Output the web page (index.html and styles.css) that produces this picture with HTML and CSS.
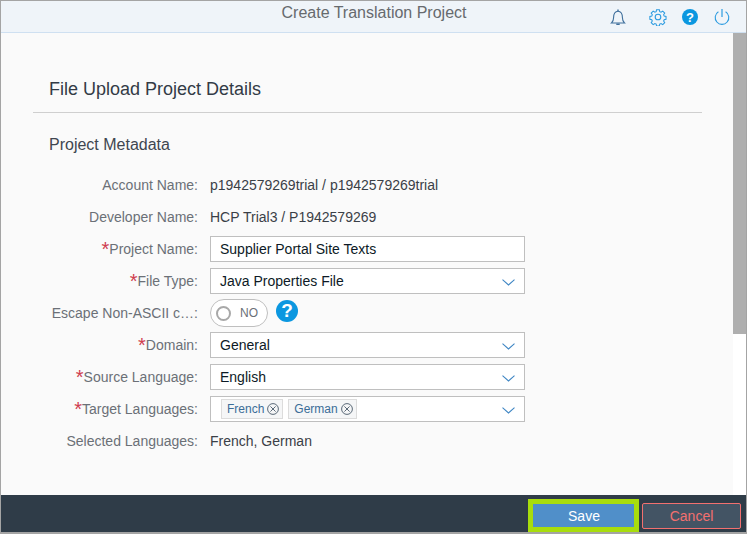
FILE: index.html
```html
<!DOCTYPE html>
<html lang="en">
<head>
<meta charset="utf-8">
<title>Create Translation Project</title>
<link rel="stylesheet" href="styles.css">
</head>
<body>
<div class="app">
  <header class="topbar">
    <div class="topbar-title">Create Translation Project</div>
    <div class="topbar-icons">
      <svg class="ico ico-bell" viewBox="0 0 18 18" width="18" height="18"><path d="M2.500 15h13c-1.600-1.400-2.100-3-2.100-5.500 0-3.500-1.400-6.300-4.400-6.300S4.600 6 4.600 9.500c0 2.500-.5 4.100-2.100 5.500z" fill="none" stroke="#3f6f9c" stroke-width="1.100"/><path d="M9 1.500v1.700M7.300 16.200h3.400" stroke="#3f6f9c" stroke-width="1.400"/></svg>
      <svg class="ico" viewBox="0 0 18 18" width="18" height="18"><path d="M7.500 1.500h3l.4 2.100 1.400.6 1.800-1.200 2.100 2.100-1.200 1.800.6 1.400 2 .4v3l-2 .4-.6 1.400 1.200 1.800-2.100 2.100-1.800-1.200-1.400.6-.4 2h-3l-.4-2-1.400-.6-1.800 1.200-2.100-2.100 1.200-1.800-.6-1.400-2-.4v-3l2-.4.6-1.400-1.200-1.800 2.100-2.100 1.800 1.200 1.400-.6z" transform="translate(.5 .3) scale(.94)" fill="none" stroke="#2b9be0" stroke-width="1.100"/><circle cx="9" cy="9" r="2.800" fill="none" stroke="#2b9be0" stroke-width="1.100"/></svg>
      <span class="help help-top">?</span>
      <svg class="ico" viewBox="0 0 18 18" width="18" height="18"><path d="M5.400 3.800a6.800 6.800 0 1 0 7.200 0" fill="none" stroke="#2b9be0" stroke-width="1.100"/><path d="M9 1v8" stroke="#2b9be0" stroke-width="1.200"/></svg>
    </div>
  </header>
  <div class="body-row">
    <main class="content">
      <h1 class="page-title">File Upload Project Details</h1>
      <h2 class="section-title">Project Metadata</h2>
      <div class="form">
        <div class="row"><label class="lbl">Account Name:</label><span class="val">p1942579269trial / p1942579269trial</span></div>
        <div class="row"><label class="lbl">Developer Name:</label><span class="val">HCP Trial3 / P1942579269</span></div>
        <div class="row"><label class="lbl"><i class="req">*</i>Project Name:</label><div class="field">Supplier Portal Site Texts</div></div>
        <div class="row"><label class="lbl"><i class="req">*</i>File Type:</label><div class="field">Java Properties File<svg class="chev" viewBox="0 0 13 7" width="13" height="7"><path d="M.5.700 6.500 6l6-5.300" fill="none" stroke="#3f86c4" stroke-width="1.100"/></svg></div></div>
        <div class="row"><label class="lbl">Escape Non-ASCII c…:</label>
          <div class="toggle"><span class="knob"></span><span class="toggle-text">NO</span></div>
          <span class="help help-form">?</span>
        </div>
        <div class="row"><label class="lbl"><i class="req">*</i>Domain:</label><div class="field">General<svg class="chev" viewBox="0 0 13 7" width="13" height="7"><path d="M.5.700 6.500 6l6-5.300" fill="none" stroke="#3f86c4" stroke-width="1.100"/></svg></div></div>
        <div class="row"><label class="lbl"><i class="req">*</i>Source Language:</label><div class="field">English<svg class="chev" viewBox="0 0 13 7" width="13" height="7"><path d="M.5.700 6.500 6l6-5.300" fill="none" stroke="#3f86c4" stroke-width="1.100"/></svg></div></div>
        <div class="row"><label class="lbl"><i class="req">*</i>Target Languages:</label>
          <div class="field field-tokens">
            <span class="token">French<svg class="tok-x" viewBox="0 0 12 12" width="12" height="12"><circle cx="6" cy="6" r="5.400" fill="none" stroke="#4a5a6a" stroke-width=".9"/><path d="M3.400 3.400l5.200 5.200M8.600 3.400l-5.200 5.200" stroke="#4a5a6a" stroke-width=".9"/></svg></span>
            <span class="token">German<svg class="tok-x" viewBox="0 0 12 12" width="12" height="12"><circle cx="6" cy="6" r="5.400" fill="none" stroke="#4a5a6a" stroke-width=".9"/><path d="M3.400 3.400l5.200 5.200M8.600 3.400l-5.200 5.200" stroke="#4a5a6a" stroke-width=".9"/></svg></span>
            <svg class="chev" viewBox="0 0 13 7" width="13" height="7"><path d="M.5.700 6.500 6l6-5.300" fill="none" stroke="#3f86c4" stroke-width="1.100"/></svg>
          </div>
        </div>
        <div class="row"><label class="lbl">Selected Languages:</label><span class="val">French, German</span></div>
      </div>
    </main>
    <div class="scrollbar"><div class="thumb"></div></div>
  </div>
  <footer class="footer">
    <button class="btn btn-save">Save</button>
    <button class="btn btn-cancel">Cancel</button>
  </footer>
</div>
</body>
</html>
```
FILE: styles.css
```css
* { box-sizing: border-box; }
html, body { margin: 0; height: 100%; background: #fff; }
body { font-family: "Liberation Sans", Arial, sans-serif; overflow: hidden; }
.app {
  width: 747px; height: 534px;
  display: flex; flex-direction: column;
  border: 1px solid #a4a4a4; border-bottom-width: 2px;
}
.topbar {
  height: 32px; flex: none;
  display: flex; align-items: center; position: relative;
  background: #eff4f9; border-bottom: 1px solid #cfe0f1;
}
.topbar-title {
  flex: 1; text-align: center; font-size: 16px; line-height: 22px;
  color: #666a6e; padding: 0 0 8px 1px;
}
.topbar-icons {
  position: absolute; right: 15px; top: 7px;
  display: flex; align-items: center; gap: 15px;
}
.ico { display: block; flex: none; }
.ico-bell { margin-right: 7px; }
.help {
  display: flex; align-items: center; justify-content: center;
  border-radius: 50%; background: #0b97e0; color: #fff;
  font-weight: 700; flex: none;
}
.help-top { width: 16px; height: 16px; font-size: 13px; }
.help-form { width: 22px; height: 22px; font-size: 19px; margin: 0 0 4px 8px; }
.body-row { flex: 1; display: flex; min-height: 0; }
.content { flex: 1; background: #fafafa; padding: 0 31px 0 32px; min-width: 0; }
.page-title {
  margin: 43px 0 0; padding: 0 0 10px 16px;
  font-size: 18px; line-height: 26px; font-weight: 400; color: #333b46;
  border-bottom: 1px solid #cfcfcf;
}
.section-title {
  margin: 21px 0 0; padding-left: 16px;
  font-size: 16px; line-height: 22px; font-weight: 400; color: #3f4650;
}
.form { margin-top: 13px; display: flex; flex-direction: column; }
.row { height: 32px; display: flex; align-items: center; font-size: 14px; }
.lbl { width: 165px; flex: none; text-align: right; color: #6b7077; margin-right: 12px; }
.req { color: #cf3d4f; font-style: normal; font-size: 20px; line-height: 14px; vertical-align: -2px; }
.val { color: #3a4047; }
.field {
  width: 315px; height: 26px; flex: none; position: relative;
  display: flex; align-items: center;
  padding-left: 9px; background: #fff; border: 1px solid #bfbfbf; color: #0d1a26;
}
.chev { position: absolute; right: 9px; top: 10px; }
.field-tokens { padding-left: 10px; gap: 5px; }
.token {
  height: 20px; display: inline-flex; align-items: center; gap: 3px;
  padding: 0 3px 0 5px; font-size: 12px; color: #3b6d98;
  background: #f5f6f7; border: 1px solid #dcdcdc;
}
.tok-x { display: block; }
.toggle {
  width: 58px; height: 28px; flex: none;
  display: flex; align-items: center; background: #fff;
  border: 1px solid #bfbfbf; border-radius: 14px;
}
.knob {
  width: 15px; height: 15px; margin-left: 5px; border-radius: 50%;
  border: 2px solid #a8a8a8; flex: none;
}
.toggle-text { margin-left: 9px; font-size: 12px; color: #6b7077; }
.scrollbar { width: 13px; flex: none; background: #fff; }
.thumb { height: 301px; background: #afafaf; }
.footer {
  height: 37px; flex: none;
  display: flex; align-items: center; justify-content: flex-end; gap: 3px;
  padding: 4px 5px 0 0; background: #2f3c48;
}
.btn { height: 26px; font-family: inherit; font-size: 14px; border-radius: 2px; padding: 0; }
.btn-save {
  width: 111px; height: 33px; padding-left: 1px; background: #508fc9; color: #fff; border: 5px solid #a8dd0d; border-radius: 0;
}
.btn-cancel { width: 99px; background: #435464; color: #f2706f; border: 1px solid #f2706f; }
```
